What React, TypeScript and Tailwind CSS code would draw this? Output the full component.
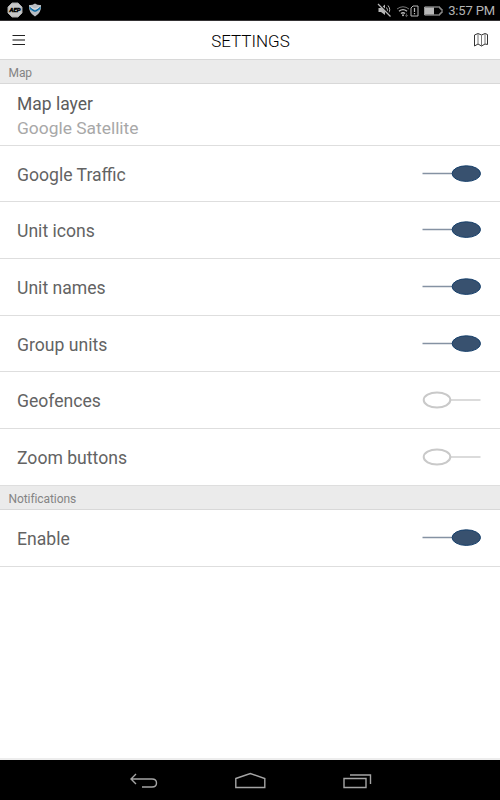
import React from 'react';

function Toggle({ on }: { on: boolean }) {
  return (
    <svg width="60" height="18" viewBox="0 0 60 18" className="block shrink-0">
      {on ? (
        <>
          <path d="M1.5 8.5H31" stroke="#8592a3" strokeWidth="1.5" />
          <ellipse cx="45.3" cy="8.6" rx="14.2" ry="7.8" fill="#38516f" stroke="#153f6b" strokeWidth="1" />
        </>
      ) : (
        <>
          <path d="M30 9H59.5" stroke="#d7d7d7" strokeWidth="1.8" />
          <ellipse cx="16" cy="9" rx="13.3" ry="7.5" fill="#fff" stroke="#c9c9c9" strokeWidth="2" />
        </>
      )}
    </svg>
  );
}

function Row({ label, on, size }: { label: string; on: boolean; size: string }) {
  return (
    <div className={`flex items-center justify-between border-b border-[#dedede] pl-[17px] pr-[19px] ${size}`}>
      <span className="pt-[2px] text-[17.6px] leading-6 text-[#636363]">{label}</span>
      <Toggle on={on} />
    </div>
  );
}

function Section({ title, size }: { title: string; size: string }) {
  return (
    <div className={`flex items-center border-b border-[#d8d8d8] bg-[#ebebeb] pl-[8.5px] pt-[2px] text-[12px] leading-4 tracking-[-0.08px] text-[#848484] ${size}`}>
      {title}
    </div>
  );
}

function StatusBar() {
  return (
    <div className="flex h-[21px] items-center justify-between border-b border-[#343234] bg-black pl-[7px] pr-[5px]">
      <div className="flex items-center gap-[5px]">
        <svg width="16" height="16" viewBox="0 0 16 16">
          <path d="M5 1h6l4 4v6l-4 4H5l-4-4V5z" fill="#c7c7c7" stroke="#aaa" />
          <text x="8" y="10.3" textAnchor="middle" fontSize="6" fontWeight="900" fontStyle="italic" fill="#000" stroke="#000" strokeWidth=".4" fontFamily="Roboto, sans-serif">AEP</text>
        </svg>
        <svg width="14" height="16" viewBox="0 0 14 16">
          <path d="M1 3Q4 3.5 7 1.5Q10 3.5 13 3Q13.5 11 7 14.5Q.5 11 1 3Z" fill="#b9bdc2" />
          <path d="M1 5L5.2 7.2L7 8.4L8.8 7.2L13 5L12 7.5L8.5 9.5H5.5L2 7.5Z" fill="#2593c9" />
          <path d="M2 4L7 6.6L12 4L10.7 6.5L7 7.5L3.3 6.5Z" fill="#d5dadd" />
          <path d="M2 5.5L6 9H8L12 5.5" fill="none" stroke="#145b91" />
        </svg>
      </div>
      <div className="flex items-center text-[#b8b8b8]">
        <svg width="15" height="16" viewBox="0 0 15 16" fill="none" stroke="currentColor">
          <path d="M1.5 6H4L8 2.5V13L4 10H1.5Z" fill="currentColor" stroke="none" />
          <path d="M9.5 5.5Q11.5 8 9.5 10M11 3.5Q14.5 8 11 11.5" />
          <path d="M1.5 1.5L14 14" stroke="#000" strokeWidth="2" />
          <path d="M1 2L13.5 14.5" strokeWidth="1.2" />
        </svg>
        <svg width="14" height="14" viewBox="0 0 14 14" fill="none" stroke="currentColor" className="ml-[4px] mt-px">
          <path d="M1 5Q7 .5 13 5" stroke="#777" />
          <path d="M3 7.3Q7 4 11 7.3M5 9.5Q7 7.8 9 9.5" strokeWidth="1.4" />
          <circle cx="7" cy="11.3" r="1" fill="currentColor" stroke="none" />
          <path d="M10.5 9.5v3M8.8 11l1.7 1.7 1.5-1.7" stroke="#777" strokeWidth=".7" />
        </svg>
        <svg width="9" height="12" viewBox="0 0 9 12" fill="none" stroke="currentColor" className="mt-px">
          <path d="M3 1H8V11H1V3Z" />
          <path d="M4.5 3V7M4.5 8V9.3" strokeWidth="1.2" />
        </svg>
        <svg width="19" height="10" viewBox="0 0 19 10" className="ml-[5px] mt-px">
          <path d="M.7 1H16V3H18V7H16V9H.7Z" fill="none" stroke="currentColor" />
          <path d="M1 1.5H10V8.5H1Z" fill="currentColor" />
        </svg>
        <span className="ml-[5px] mt-[2px] whitespace-nowrap text-[13px] leading-4 tracking-[-0.15px] text-[#b4b4b4]">3:57 PM</span>
      </div>
    </div>
  );
}

export default function App() {
  return (
    <div className="flex h-[800px] w-[500px] flex-col overflow-hidden bg-white font-[Roboto,sans-serif]">
      <StatusBar />
      <header className="grid h-[39px] grid-cols-[1fr_auto_1fr] items-center border-b border-[#d8d8d8] pl-[12px] pr-[11px]">
        <svg width="14" height="12" viewBox="0 0 14 12">
          <path d="M.5 1.5H13M.5 10.5H13" stroke="#222" strokeWidth="1.2" />
          <path d="M.5 6H13" stroke="#777" strokeWidth="1.8" />
        </svg>
        <h1 className="pt-[2px] text-[17px] font-light leading-6 text-black">SETTINGS</h1>
        <svg width="16" height="16" viewBox="0 0 16 16" fill="none" className="justify-self-end">
          <path d="M1.5 3L5 1.5L8.5 3L12 1.5L14.5 2.5V12.5L12 12L8.5 14L5 12L1.5 14Z" stroke="#333" />
          <path d="M5 1.5V12M8.5 3V14M12 1.5V12" stroke="#777" />
        </svg>
      </header>
      <main className="flex-1">
        <Section title="Map" size="h-[24px]" />
        <div className="flex h-[62px] flex-col justify-center border-b border-[#dedede] pl-[17px] pt-[2px] text-[17.5px] leading-6">
          <span className="text-[#5c5c5c]">Map layer</span>
          <span className="text-[17.4px] text-[#a8a8a8]">Google Satellite</span>
        </div>
        <Row label="Google Traffic" on size="h-[56px]" />
        <Row label="Unit icons" on size="h-[57px]" />
        <Row label="Unit names" on size="h-[57px]" />
        <Row label="Group units" on size="h-[56px]" />
        <Row label="Geofences" on={false} size="h-[57px]" />
        <Row label="Zoom buttons" on={false} size="h-[57px]" />
        <Section title="Notifications" size="h-[24px]" />
        <Row label="Enable" on size="h-[57px]" />
      </main>
      <nav className="flex h-[42px] items-center justify-between border-t-2 border-[#ededed] bg-black pl-[129px] pr-[128px]">
        <svg width="30" height="20" viewBox="0 0 30 20" fill="none" stroke="#a5a5a5" strokeWidth="1.4">
          <path d="M7 4L2 9L7 14M2 9H23Q27.5 9 27.5 13T23 17H13" />
        </svg>
        <svg width="32" height="20" viewBox="0 0 32 20" fill="none" stroke="#a5a5a5" strokeWidth="1.4">
          <path d="M.8 8.5L15.3 3.5L29.8 8.5V17.5H.8Z" />
        </svg>
        <svg width="30" height="20" viewBox="0 0 30 20" fill="none" stroke="#a5a5a5" strokeWidth="1.4">
          <path d="M2 8.5H24V17.5H2ZM8 5H28.5V14" />
        </svg>
      </nav>
    </div>
  );
}
